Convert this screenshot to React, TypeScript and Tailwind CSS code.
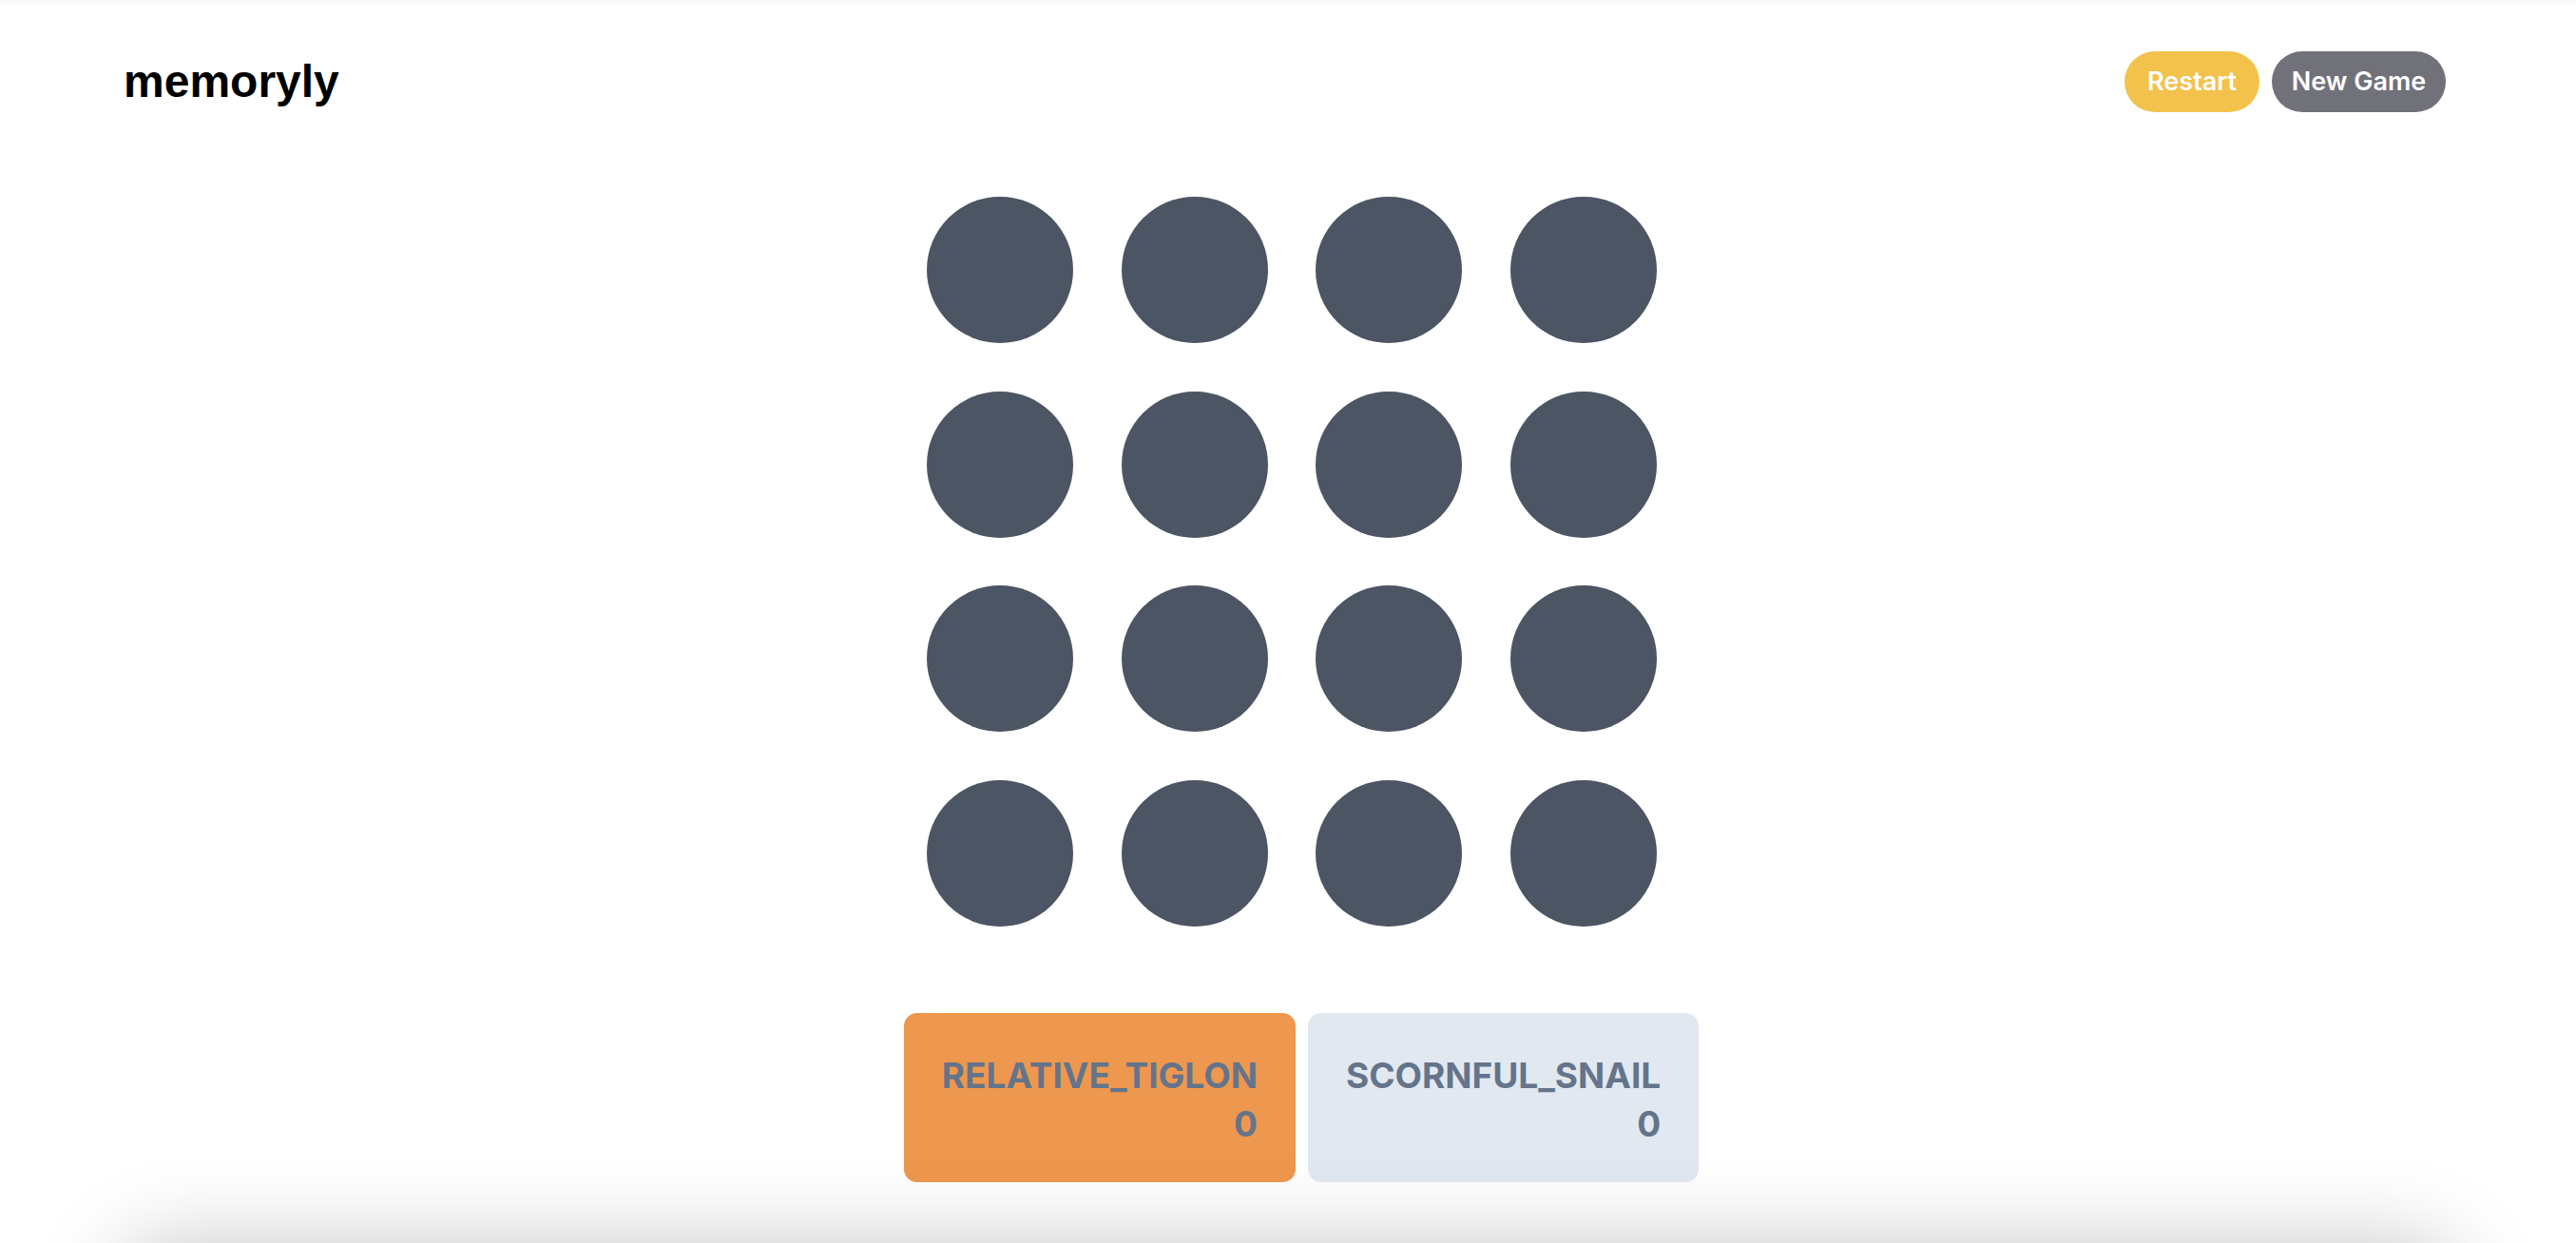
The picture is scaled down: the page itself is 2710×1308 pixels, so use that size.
const players = [
  { name: "RELATIVE_TIGLON", score: 0, active: true },
  { name: "SCORNFUL_SNAIL", score: 0, active: false },
];

const cells = Array.from({ length: 16 }, (_, i) => i);

export default function App() {
  return (
    <div className="relative h-screen overflow-hidden bg-white font-['Inter',sans-serif]">
      {/* faint shadows from the frame above and below */}
      <div className="absolute bottom-full left-0 right-0 h-10 shadow-[0_0_8px_rgba(0,0,0,0.08)]" />
      <div className="absolute left-[120px] right-[120px] top-full h-[200px] rounded-[60px] shadow-[0_0_90px_rgba(0,0,0,0.22)]" />

      <header className="flex items-center justify-between py-[54px] pl-[130px] pr-[137px]">
        <h1 className="font-['Liberation_Sans',Arial,sans-serif] text-[48px] font-bold leading-none text-black">memoryly</h1>
        <div className="flex items-center gap-[13px]">
          <button className="h-16 w-[142px] rounded-full bg-[#f2c24d] text-[27px] font-semibold text-white">Restart</button>
          <button className="h-16 w-[183px] rounded-full bg-[#71717a] text-[27px] font-semibold text-white">New Game</button>
        </div>
      </header>

      <main className="flex flex-col items-center">
        <div className="mt-[35px] flex justify-center pl-[8px]">
          <div className="grid grid-cols-4 gap-[50.5px]">
            {cells.map((i) => (
              <button key={i} className="h-[154px] w-[154px] rounded-full bg-[#4b5563]" />
            ))}
          </div>
        </div>

        <div className="mt-[91px] flex justify-center gap-[13px] pl-[28px]">
          {players.map((p) => (
            <div
              key={p.name}
              className={`rounded-[14px] px-10 pb-9 pt-10 text-right text-[37px] font-bold leading-[51px] text-[#64748b] ${
                p.active ? "bg-[#ee974e]" : "bg-[#e2e8f0]"
              }`}
            >
              <p>{p.name}</p>
              <p>{p.score}</p>
            </div>
          ))}
        </div>
      </main>
    </div>
  );
}
